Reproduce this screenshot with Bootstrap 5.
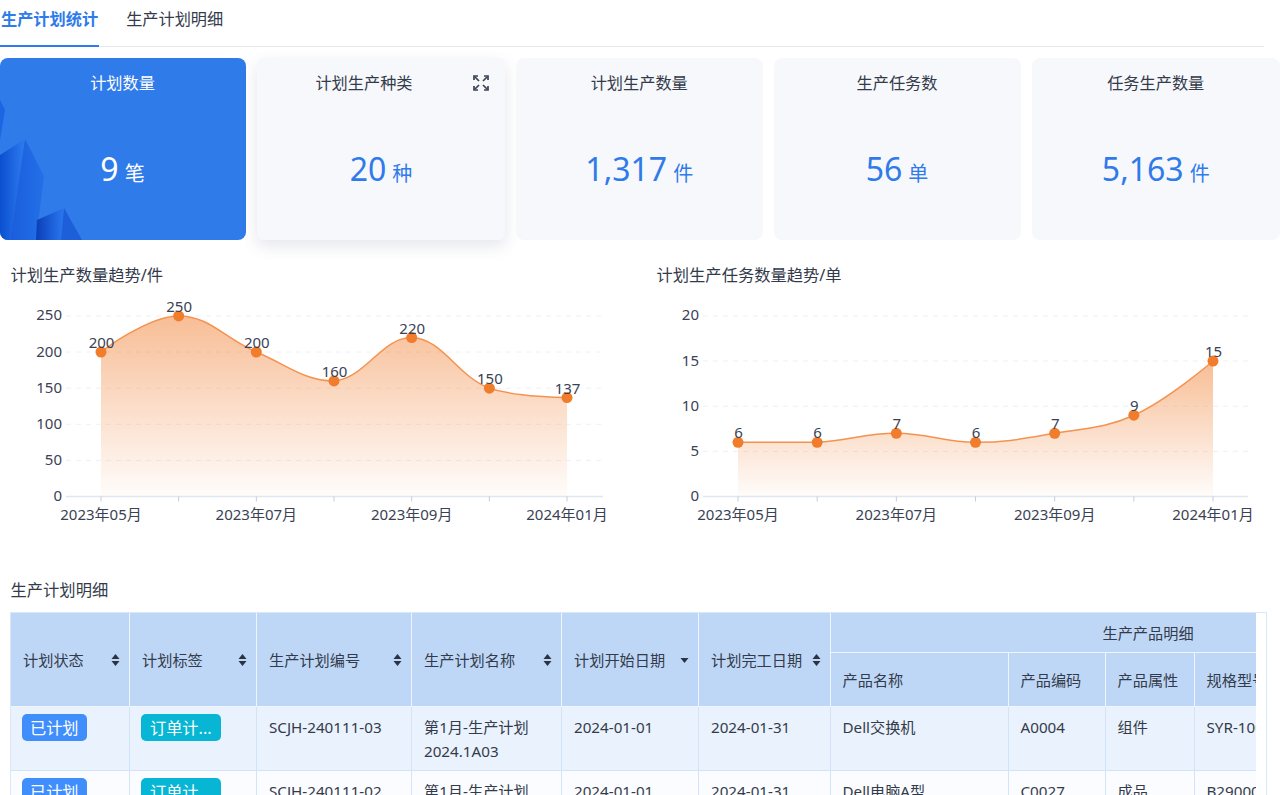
<!DOCTYPE html>
<html lang="zh-CN">
<head>
    <meta charset="UTF-8">
    <meta name="viewport" content="width=device-width, initial-scale=1.0">
    <title>生产计划统计</title>
    <link rel="stylesheet" href="https://cdn.jsdelivr.net/npm/bootstrap@5.3.0/dist/css/bootstrap.min.css">
    <style>
        html, body {
            height: 795px;
            overflow: hidden;
        }
        body {
            font-family: "Noto Sans", "Noto Sans CJK SC", sans-serif;
            color: #333b4a;
            background: #fff;
        }
        .tab-bar {
            width: 1264px;
            height: 47px;
            gap: 26px;
            border-bottom: 1px solid #e6e8ef;
        }
        .tab-item {
            height: 47px;
            padding: 7px 1px 0 1px;
            font-size: 16.2px;
            line-height: 24px;
            color: #333b4a;
        }
        .tab-item.on {
            color: #2f7bea;
            font-weight: 700;
            border-bottom: 2px solid #2f7bea;
        }
        .stat-row {
            display: grid;
            grid-template-columns: 246px 248px 246.5px 247px 248.5px;
            margin-top: 11px;
            gap: 11px;
        }
        .stat-box {
            height: 182px;
            border: 0;
            border-radius: 8px;
            background: #f7f8fc;
            overflow: hidden;
            padding-top: 14px;
            text-align: center;
        }
        .stat-box.hot {
            padding-right: 1px;
            background: #2f7bea;
            color: #fff;
        }
        .stat-box.lift {
            overflow: visible;
            border-radius: 6px;
            box-shadow: 0 6px 16px rgba(70, 80, 130, .14);
        }
        .stat-name {
            position: relative;
            font-size: 16.2px;
            line-height: 22px;
        }
        .zoom-box {
            flex: 0 0 34px;
            padding: 3px 0 0 2px;
            text-align: left;
            line-height: 0;
        }
        .stat-num {
            position: relative;
            margin-top: 53px;
            font-size: 32px;
            line-height: 44px;
            color: #2f7bea;
        }
        .stat-num span {
            font-size: 20px;
            margin-left: 6px;
        }
        .hot .stat-num {
            color: #fff;
        }
        .rocks {
            position: absolute;
            left: 0;
            top: 0;
        }
        .chart-row {
            margin-top: 24px;
        }
        .chart-left {
            flex: 0 0 646px;
        }
        .chart-right {
            flex: 0 0 634px;
        }
        .block-title {
            padding-left: 10.5px;
            font-size: 16.3px;
            line-height: 22px;
        }
        .chart-svg {
            display: block;
            margin-top: 4px;
        }
        .chart-svg text {
            font-family: "Noto Sans", "Noto Sans CJK SC", sans-serif;
            font-size: 15px;
            fill: #3a4254;
        }
        .table-title {
            margin-top: 49px;
            margin-bottom: 11px;
        }
        .table-shell {
            width: 1257px;
            margin-left: 10px;
            padding-right: 10px;
            border: 1px solid #dbe8f9;
        }
        .table-clip {
            overflow: hidden;
        }
        .plan-table {
            width: 1452px;
            margin: 0;
            table-layout: fixed;
            border-collapse: separate;
            border-spacing: 0;
            font-size: 15.2px;
            line-height: 24px;
        }
        .plan-table thead {
            --bs-table-bg: #bfd7f7;
        }
        .plan-table tbody tr:nth-child(odd) {
            --bs-table-bg: #eaf2fd;
        }
        .plan-table tbody tr:nth-child(even) {
            --bs-table-bg: #fbfcff;
        }
        .plan-table.table > :not(caption) > * > * {
            color: #333b4a;
            padding: 8px 12px 0;
            vertical-align: top;
            border-width: 0 1px 1px 0;
            border-style: solid;
            border-color: #d3e3f8;
            box-shadow: none;
        }
        .plan-table.table > thead > tr > th {
            font-weight: 400;
            padding: 0 9px 0 12px;
            vertical-align: middle;
            border-color: #eff5fd;
        }
        .plan-table.table > thead > .row-two > th,
        .plan-table.table > tbody > tr > td:nth-child(n+7) {
            padding-left: 11.5px;
        }
        .plan-table .row-one {
            height: 40px;
        }
        .plan-table .row-two {
            height: 54px;
        }
        .plan-table tbody tr {
            height: 64px;
        }
        .plan-table.table > tbody > tr > .tag-cell {
            padding-top: 7px;
            padding-left: 11px;
        }
        .group-head {
            text-align: center;
        }
        .state-tag {
            display: inline-block;
            height: 27px;
            padding: 0 8px;
            border-radius: 5px;
            font-size: 16.2px;
            line-height: 28px;
            color: #fff;
            background: #3f8efc;
        }
        .state-tag.cyan {
            padding: 0 9px;
            background: #06b6d4;
        }
        .sort-mark {
            flex: none;
        }
    </style>
</head>
<body>
    <nav class="nav tab-bar">
        <a class="tab-item on text-decoration-none" href="#">生产计划统计</a>
        <a class="tab-item text-decoration-none" href="#">生产计划明细</a>
    </nav>

    <div class="stat-row">
        <div class="card stat-box hot">
            <svg class="rocks" width="90" height="182" viewBox="0 0 90 182">
                <defs>
                    <linearGradient id="rockA" x1="0" y1="0" x2="1" y2="0">
                        <stop offset="0" stop-color="#0b4fd0"/>
                        <stop offset="1" stop-color="#2e7cf0"/>
                    </linearGradient>
                    <linearGradient id="rockB" x1="0" y1="0" x2="1" y2="0">
                        <stop offset="0" stop-color="#1a5ddd"/>
                        <stop offset="1" stop-color="#2470e8"/>
                    </linearGradient>
                    <linearGradient id="rockC" x1="0" y1="0" x2="1" y2="0">
                        <stop offset="0" stop-color="#0a3fb8"/>
                        <stop offset="1" stop-color="#2a78f0"/>
                    </linearGradient>
                </defs>
                <polygon points="0,42 5,52 0,82" fill="#1b66e2"/>
                <polygon points="0,97 25,81 10,182 0,182" fill="url(#rockA)"/>
                <polygon points="25,81 44,118 36,182 10,182" fill="url(#rockB)"/>
                <polygon points="37,162 64,150 61,182 36,182" fill="url(#rockC)"/>
                <polygon points="64,150 82,182 61,182" fill="#1d5fd8"/>
            </svg>
            <div class="stat-name">计划数量</div>
            <div class="stat-num">9<span>笔</span></div>
        </div>
        <div class="card stat-box lift">
            <div class="d-flex stat-name">
                <div class="flex-grow-1">计划生产种类</div>
                <div class="zoom-box">
                    <svg width="16" height="16" viewBox="0 0 16 16" fill="none" stroke="#3a4254" stroke-width="1.7">
                        <path d="M1 5V1H5M11 1H15V5M15 11V15H11M5 15H1V11"/>
                        <path d="M2 2L6 6M14 2L10 6M14 14L10 10M2 14L6 10"/>
                    </svg>
                </div>
            </div>
            <div class="stat-num">20<span>种</span></div>
        </div>
        <div class="card stat-box">
            <div class="stat-name">计划生产数量</div>
            <div class="stat-num">1,317<span>件</span></div>
        </div>
        <div class="card stat-box">
            <div class="stat-name">生产任务数</div>
            <div class="stat-num">56<span>单</span></div>
        </div>
        <div class="card stat-box">
            <div class="stat-name">任务生产数量</div>
            <div class="stat-num">5,163<span>件</span></div>
        </div>
    </div>

    <div class="d-flex chart-row">
        <div class="chart-left">
            <div class="block-title">计划生产数量趋势/件</div>
            <svg class="chart-svg" id="chartQty" width="646" height="240"></svg>
        </div>
        <div class="chart-right">
            <div class="block-title">计划生产任务数量趋势/单</div>
            <svg class="chart-svg" id="chartTask" width="634" height="240"></svg>
        </div>
    </div>

    <div class="block-title table-title">生产计划明细</div>
    <div class="table-shell">
        <div class="table-clip">
            <table class="table plan-table">
                <colgroup>
                    <col width="119"><col width="127"><col width="155"><col width="150"><col width="137">
                    <col width="132"><col width="178"><col width="97"><col width="89"><col width="268">
                </colgroup>
                <thead>
                    <tr class="row-one">
                        <th rowspan="2"><div class="d-flex justify-content-between align-items-center">计划状态<svg class="sort-mark" width="9" height="14" viewBox="0 0 9 14"><path d="M4.500 1L8.500 6H.5ZM4.500 13L.5 8H8.500Z" fill="#2b3342"/></svg></div></th>
                        <th rowspan="2"><div class="d-flex justify-content-between align-items-center">计划标签<svg class="sort-mark" width="9" height="14" viewBox="0 0 9 14"><path d="M4.500 1L8.500 6H.5ZM4.500 13L.5 8H8.500Z" fill="#2b3342"/></svg></div></th>
                        <th rowspan="2"><div class="d-flex justify-content-between align-items-center">生产计划编号<svg class="sort-mark" width="9" height="14" viewBox="0 0 9 14"><path d="M4.500 1L8.500 6H.5ZM4.500 13L.5 8H8.500Z" fill="#2b3342"/></svg></div></th>
                        <th rowspan="2"><div class="d-flex justify-content-between align-items-center">生产计划名称<svg class="sort-mark" width="9" height="14" viewBox="0 0 9 14"><path d="M4.500 1L8.500 6H.5ZM4.500 13L.5 8H8.500Z" fill="#2b3342"/></svg></div></th>
                        <th rowspan="2"><div class="d-flex justify-content-between align-items-center">计划开始日期<svg class="sort-mark" width="9" height="14" viewBox="0 0 9 14"><path d="M4.500 10L.5 5H8.500Z" fill="#2b3342"/></svg></div></th>
                        <th rowspan="2"><div class="d-flex justify-content-between align-items-center">计划完工日期<svg class="sort-mark" width="9" height="14" viewBox="0 0 9 14"><path d="M4.500 1L8.500 6H.5ZM4.500 13L.5 8H8.500Z" fill="#2b3342"/></svg></div></th>
                        <th colspan="4" class="group-head">生产产品明细</th>
                    </tr>
                    <tr class="row-two">
                        <th>产品名称</th>
                        <th>产品编码</th>
                        <th>产品属性</th>
                        <th>规格型号</th>
                    </tr>
                </thead>
                <tbody>
                    <tr>
                        <td class="tag-cell"><span class="state-tag">已计划</span></td>
                        <td class="tag-cell"><span class="state-tag cyan">订单计...</span></td>
                        <td>SCJH-240111-03</td>
                        <td>第1月-生产计划<br>2024.1A03</td>
                        <td>2024-01-01</td>
                        <td>2024-01-31</td>
                        <td>Dell交换机</td>
                        <td>A0004</td>
                        <td>组件</td>
                        <td>SYR-1000</td>
                    </tr>
                    <tr>
                        <td class="tag-cell"><span class="state-tag">已计划</span></td>
                        <td class="tag-cell"><span class="state-tag cyan">订单计...</span></td>
                        <td>SCJH-240111-02</td>
                        <td>第1月-生产计划<br>2024.1A02</td>
                        <td>2024-01-01</td>
                        <td>2024-01-31</td>
                        <td>Dell电脑A型</td>
                        <td>C0027</td>
                        <td>成品</td>
                        <td>B29000</td>
                    </tr>
                </tbody>
            </table>
        </div>
    </div>

    <script src="https://cdn.jsdelivr.net/npm/bootstrap@5.3.0/dist/js/bootstrap.bundle.min.js"></script>
    <script>
        // same smoothing as the echarts line series
        function smoothPath(pts) {
            var k = 0.4;
            var clamp = function (v, a, b) { return Math.min(Math.max(v, Math.min(a, b)), Math.max(a, b)); };
            var outs = [], ins = [];
            pts.forEach(function (p, i) {
                var prev = pts[i - 1] || p, next = pts[i + 1] || p;
                var vx = next[0] - prev[0], vy = next[1] - prev[1];
                var lp = Math.hypot(p[0] - prev[0], p[1] - prev[1]);
                var ln = Math.hypot(next[0] - p[0], next[1] - p[1]);
                var r = ln / (lp + ln);
                outs.push(i === 0 ? p : [p[0] + vx * k * r, clamp(p[1] + vy * k * r, p[1], next[1])]);
                ins.push(i === pts.length - 1 ? p : [p[0] - vx * k * (1 - r), clamp(p[1] - vy * k * (1 - r), p[1], prev[1])]);
            });
            var d = 'M' + pts[0].join(' ');
            for (var i = 1; i < pts.length; i++) {
                d += 'C' + outs[i - 1].join(' ') + ' ' + ins[i].join(' ') + ' ' + pts[i].join(' ');
            }
            return d;
        }

        function drawChart(id, o) {
            var base = 206.5;
            var y = function (v) { return base - v * o.scale; };
            var pts = o.data.map(function (v, i) { return [o.x0 + i * o.step, y(v)]; });
            var line = smoothPath(pts);
            var html = '<defs><linearGradient id="' + id + 'Fill" x1="0" y1="0" x2="0" y2="1">' +
                '<stop offset="0" stop-color="#f07c2c" stop-opacity=".5"/>' +
                '<stop offset="1" stop-color="#f07c2c" stop-opacity=".02"/></linearGradient></defs>';
            o.ticks.forEach(function (t) {
                if (t) {
                    html += '<line x1="' + o.left + '" x2="' + o.right + '" y1="' + y(t) + '" y2="' + y(t) + '" stroke="#eef0f5" stroke-dasharray="5 5"/>';
                }
                html += '<text x="' + o.labelX + '" y="' + (y(t) + 4.5) + '" text-anchor="end">' + t + '</text>';
            });
            html += '<path d="' + line + 'L' + pts[pts.length - 1][0] + ' ' + base + 'L' + pts[0][0] + ' ' + base + 'Z" fill="url(#' + id + 'Fill)"/>';
            html += '<line x1="' + o.left + '" x2="' + o.right + '" y1="' + base + '" y2="' + base + '" stroke="#e0e6f1" stroke-width="1.5"/>';
            pts.forEach(function (p) {
                html += '<line x1="' + p[0] + '" x2="' + p[0] + '" y1="' + base + '" y2="' + (base + 5) + '" stroke="#c6ccd9"/>';
            });
            html += '<path d="' + line + '" fill="none" stroke="#f5924f" stroke-width="1.5"/>';
            pts.forEach(function (p, i) {
                html += '<circle cx="' + p[0] + '" cy="' + p[1] + '" r="5.5" fill="#f07c2c"/>';
                html += '<text x="' + (p[0] + 0.5) + '" y="' + (p[1] - 4) + '" text-anchor="middle">' + o.data[i] + '</text>';
            });
            o.months.forEach(function (m) {
                html += '<text x="' + pts[m[0]][0] + '" y="' + (base + 23) + '" text-anchor="middle">' + m[1] + '</text>';
            });
            document.getElementById(id).innerHTML = html;
        }

        var months = [[0, '2023年05月'], [2, '2023年07月'], [4, '2023年09月'], [6, '2024年01月']];
        drawChart('chartQty', {
            data: [200, 250, 200, 160, 220, 150, 137],
            ticks: [0, 50, 100, 150, 200, 250],
            scale: 0.7225, x0: 101, step: 77.67, left: 66, right: 603, labelX: 62, months: months
        });
        drawChart('chartTask', {
            data: [6, 6, 7, 6, 7, 9, 15],
            ticks: [0, 5, 10, 15, 20],
            scale: 9.03, x0: 92, step: 79.17, left: 57, right: 602, labelX: 53, months: months
        });
    </script>
</body>
</html>
